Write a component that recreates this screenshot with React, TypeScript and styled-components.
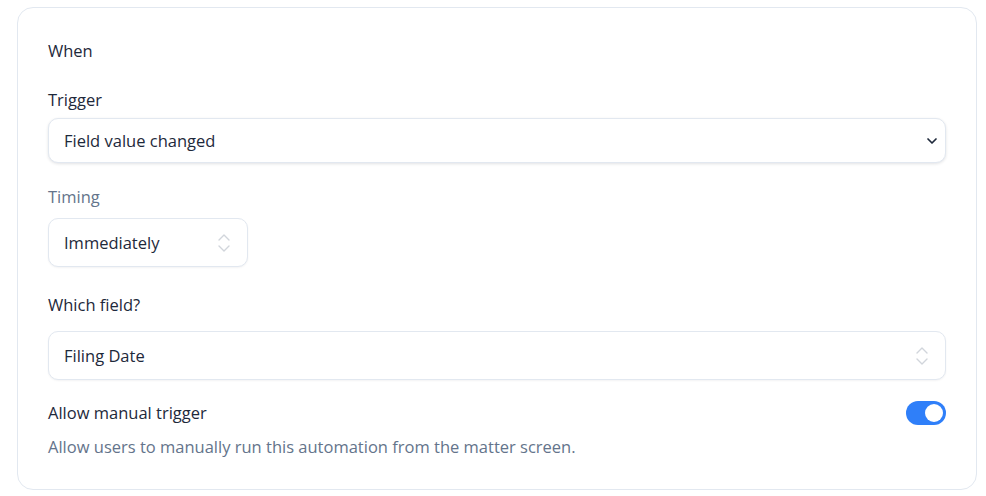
import React, { FC } from 'react';
import styled, { createGlobalStyle } from 'styled-components';

const GlobalStyle = createGlobalStyle`
  body {
    margin: 0;
    background: #ffffff;
    font-family: "Open Sans", "Noto Sans", sans-serif;
    color: #1e293b;
  }
`;

const Page = styled.div`
  padding: 7px 9px 6px 17px;
`;

const Card = styled.section`
  border: 1px solid #e2e8f0;
  border-radius: 16px;
  padding: 31px 30px 30px 30px;
  display: flex;
  flex-direction: column;
`;

const Heading = styled.h3`
  margin: 0;
  font-size: 16.5px;
  font-weight: 400;
  line-height: 24px;
`;

const Field = styled.div<{ $top: number; $gap: number }>`
  display: flex;
  flex-direction: column;
  gap: ${(p) => p.$gap}px;
  margin-top: ${(p) => p.$top}px;
`;

const Label = styled.label<{ $muted?: boolean }>`
  font-size: 16.5px;
  line-height: 24px;
  color: ${(p) => (p.$muted ? '#64748b' : '#1e293b')};
`;

const SelectBox = styled.div<{ $width?: string; $height: number; $shadow?: boolean; $iconPad: number }>`
  width: ${(p) => p.$width ?? '100%'};
  height: ${(p) => p.$height}px;
  box-sizing: border-box;
  border: 1px solid #e2e8f0;
  border-radius: 10px;
  background: #fff;
  display: flex;
  align-items: center;
  justify-content: space-between;
  padding: 0 ${(p) => p.$iconPad}px 0 15px;
  box-shadow: ${(p) => (p.$shadow ? '0 1px 3px rgba(15, 23, 42, 0.12)' : '0 1px 2px rgba(15, 23, 42, 0.05)')};
  font-size: 16.5px;
  color: #1e293b;
`;

const ToggleRow = styled.div`
  display: flex;
  align-items: center;
  justify-content: space-between;
  margin-top: 21px;
`;

const Toggle = styled.div<{ $on: boolean }>`
  width: 40px;
  height: 24px;
  border-radius: 12px;
  background: ${(p) => (p.$on ? '#2f7ff9' : '#e2e8f0')};
  display: flex;
  align-items: center;
  justify-content: ${(p) => (p.$on ? 'flex-end' : 'flex-start')};
  padding: 0 3px;
  box-sizing: border-box;
`;

const Knob = styled.span`
  width: 18px;
  height: 18px;
  border-radius: 50%;
  background: #fff;
`;

const Help = styled.p`
  margin: 10px 0 0;
  font-size: 16.5px;
  line-height: 24px;
  color: #64748b;
`;

const ChevronDown: FC = () => (
  <svg width="12" height="12" viewBox="0 0 24 24" fill="none" stroke="#1e293b" strokeWidth="3.4" strokeLinecap="round" strokeLinejoin="round">
    <path d="M4 8l8 8 8-8" />
  </svg>
);

const UpDown: FC = () => (
  <svg width="12" height="20" viewBox="0 0 12 20" fill="none" stroke="#d1d5db" strokeWidth="1.4" strokeLinecap="round" strokeLinejoin="round">
    <path d="M1 7l5-5 5 5" />
    <path d="M1 13l5 5 5-5" />
  </svg>
);

const App: FC = () => (
  <Page>
    <GlobalStyle />
    <Card>
      <Heading>When</Heading>
      <Field $top={25} $gap={6}>
        <Label>Trigger</Label>
        <SelectBox $height={45} $iconPad={7} $shadow>
          Field value changed
          <ChevronDown />
        </SelectBox>
      </Field>
      <Field $top={22} $gap={9}>
        <Label $muted>Timing</Label>
        <SelectBox $width="200px" $height={49} $iconPad={17}>
          Immediately
          <UpDown />
        </SelectBox>
      </Field>
      <Field $top={26} $gap={14}>
        <Label>Which field?</Label>
        <SelectBox $height={49} $iconPad={17}>
          Filing Date
          <UpDown />
        </SelectBox>
      </Field>
      <ToggleRow>
        <Label>Allow manual trigger</Label>
        <Toggle $on>
          <Knob />
        </Toggle>
      </ToggleRow>
      <Help>Allow users to manually run this automation from the matter screen.</Help>
    </Card>
  </Page>
);

export default App;
